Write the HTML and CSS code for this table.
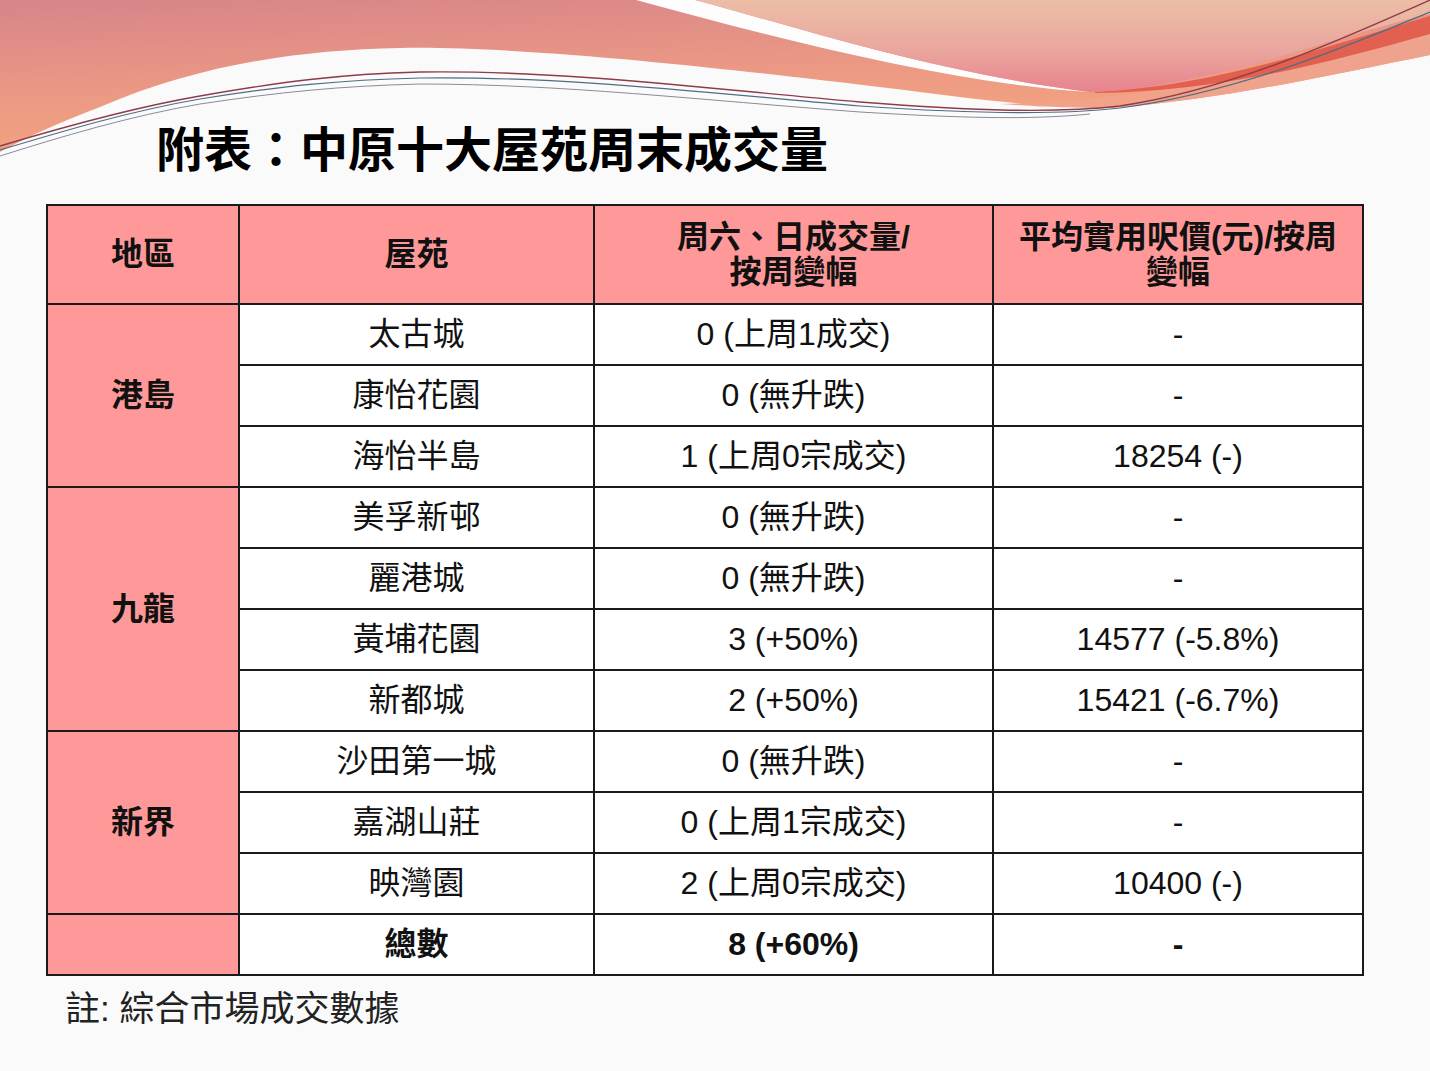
FILE: index.html
```html
<!DOCTYPE html>
<html lang="zh-Hant">
<head>
<meta charset="utf-8">
<title>附表：中原十大屋苑周末成交量</title>
<link rel="stylesheet" href="styles.css">
</head>
<body>
<div class="slide">
  <svg class="deco" width="1430" height="200" viewBox="0 0 1430 200" xmlns="http://www.w3.org/2000/svg">
    <defs>
      <linearGradient id="gSalmon" x1="0" y1="0" x2="0.35" y2="1">
        <stop offset="0" stop-color="#d8848a"/>
        <stop offset="0.6" stop-color="#ec9a84"/>
        <stop offset="1" stop-color="#f4a47e"/>
      </linearGradient>
      <linearGradient id="gPink" x1="0" y1="0" x2="0" y2="1">
        <stop offset="0" stop-color="#ecbea6"/>
        <stop offset="0.55" stop-color="#eaa69e"/>
        <stop offset="1" stop-color="#e8828f"/>
      </linearGradient>
      <linearGradient id="gBand" x1="0" y1="0" x2="1" y2="0">
        <stop offset="0" stop-color="#f3a287"/>
        <stop offset="1" stop-color="#eea38f"/>
      </linearGradient>
    </defs>
    <!-- left salmon + lower band -->
    <path d="M0,0 H1430 V55 C1330,75 1220,100 1110,108 C1020,108 930,92 820,80 C700,66 520,46 400,48 C300,50 200,64 100,107 C60,122 25,138 0,152 Z" fill="url(#gSalmon)"/>
    <path d="M1000,104 C1150,100 1300,70 1430,30 V55 C1330,75 1220,100 1110,108 C1060,108 1030,106 1000,104 Z" fill="url(#gBand)"/>
    <!-- white stripe -->
    <path d="M636,0 H695 C790,25 930,72 1090,92 C960,84 800,45 636,0 Z" fill="#fdfdfd"/>
    <!-- top right pink -->
    <path d="M695,0 H1430 V14 C1320,40 1230,80 1120,90 C1110,91 1100,92 1090,92 C930,72 790,25 695,0 Z" fill="url(#gPink)"/>
    <!-- red band -->
    <path d="M1095,92 C1220,86 1330,45 1430,16 V34 C1330,62 1220,92 1095,93 Z" fill="#e2604f"/>
    <!-- lines -->
    <path d="M0,146 C60,128 130,108 200,96 C280,82 340,74 420,72 C560,70 700,88 860,102 C960,110 1050,114 1120,106 C1230,90 1340,40 1430,0" fill="none" stroke="#8e3c48" stroke-width="1.4"/>
    <path d="M0,150 C60,132 130,111 200,99 C280,86 340,80 420,78 C560,76 700,92 860,106 C960,113 1050,116 1120,108 C1240,92 1350,45 1430,12" fill="none" stroke="#4f6c84" stroke-width="1.2"/>
    <path d="M0,156 C60,137 130,116 200,104 C280,92 340,86 420,84 C560,84 700,100 860,112 C960,118 1030,120 1090,114" fill="none" stroke="#8a8a9a" stroke-width="1"/>
  </svg>

  <div class="content">
    <h1 class="title">附表：中原十大屋苑周末成交量</h1>

    <table class="data">
      <colgroup>
        <col class="c-region">
        <col class="c-estate">
        <col class="c-volume">
        <col class="c-price">
      </colgroup>
      <thead>
        <tr class="head-row">
          <th>地區</th>
          <th>屋苑</th>
          <th>周六、日成交量/<br>按周變幅</th>
          <th>平均實用呎價(元)/按周<br>變幅</th>
        </tr>
      </thead>
      <tbody>
        <tr>
          <td class="region" rowspan="3">港島</td>
          <td>太古城</td>
          <td>0 (上周1成交)</td>
          <td>-</td>
        </tr>
        <tr>
          <td>康怡花園</td>
          <td>0 (無升跌)</td>
          <td>-</td>
        </tr>
        <tr>
          <td>海怡半島</td>
          <td>1 (上周0宗成交)</td>
          <td>18254 (-)</td>
        </tr>
        <tr>
          <td class="region" rowspan="4">九龍</td>
          <td>美孚新邨</td>
          <td>0 (無升跌)</td>
          <td>-</td>
        </tr>
        <tr>
          <td>麗港城</td>
          <td>0 (無升跌)</td>
          <td>-</td>
        </tr>
        <tr>
          <td>黃埔花園</td>
          <td>3 (+50%)</td>
          <td>14577 (-5.8%)</td>
        </tr>
        <tr>
          <td>新都城</td>
          <td>2 (+50%)</td>
          <td>15421 (-6.7%)</td>
        </tr>
        <tr>
          <td class="region" rowspan="3">新界</td>
          <td>沙田第一城</td>
          <td>0 (無升跌)</td>
          <td>-</td>
        </tr>
        <tr>
          <td>嘉湖山莊</td>
          <td>0 (上周1宗成交)</td>
          <td>-</td>
        </tr>
        <tr>
          <td>映灣園</td>
          <td>2 (上周0宗成交)</td>
          <td>10400 (-)</td>
        </tr>
        <tr class="total">
          <td class="region"></td>
          <td>總數</td>
          <td>8 (+60%)</td>
          <td>-</td>
        </tr>
      </tbody>
    </table>

    <p class="note">註: 綜合市場成交數據</p>
  </div>
</div>
</body>
</html>
```

FILE: styles.css
```css
html, body {
  margin: 0;
  padding: 0;
}

body {
  background: #fafafa;
  font-family: "Liberation Sans", "Noto Sans CJK TC", "Noto Sans CJK SC", sans-serif;
  color: #111;
}

.slide {
  position: relative;
  width: 1430px;
  height: 1071px;
  overflow: hidden;
  background: #fafafa;
}

.deco {
  position: absolute;
  top: 0;
  left: 0;
  display: block;
}

.content {
  position: relative;
  padding-top: 127px;
}

.title {
  margin: 0 0 0 156px;
  font-size: 48px;
  line-height: 48px;
  font-weight: bold;
  color: #000;
}

.data {
  margin: 29px 0 0 46px;
  width: 1316px;
  table-layout: fixed;
  border-collapse: collapse;
  background: #fff;
}

.c-region { width: 192px; }
.c-estate { width: 355px; }
.c-volume { width: 399px; }
.c-price  { width: 370px; }

.data th,
.data td {
  border: 2px solid #1a1a1a;
  padding: 0;
  text-align: center;
  vertical-align: middle;
  font-size: 32px;
  line-height: 35px;
}

.head-row {
  height: 99px;
}

.data th {
  background: #ff9999;
  font-weight: bold;
  color: #111;
}

.data tbody tr {
  height: 61px;
}

.data td {
  font-weight: normal;
  color: #111;
}

.data td.region {
  background: #ff9999;
  font-weight: bold;
}

.total td {
  font-weight: bold;
}

.note {
  margin: 13px 0 0 65px;
  font-size: 35px;
  line-height: 40px;
  color: #222;
}
```
